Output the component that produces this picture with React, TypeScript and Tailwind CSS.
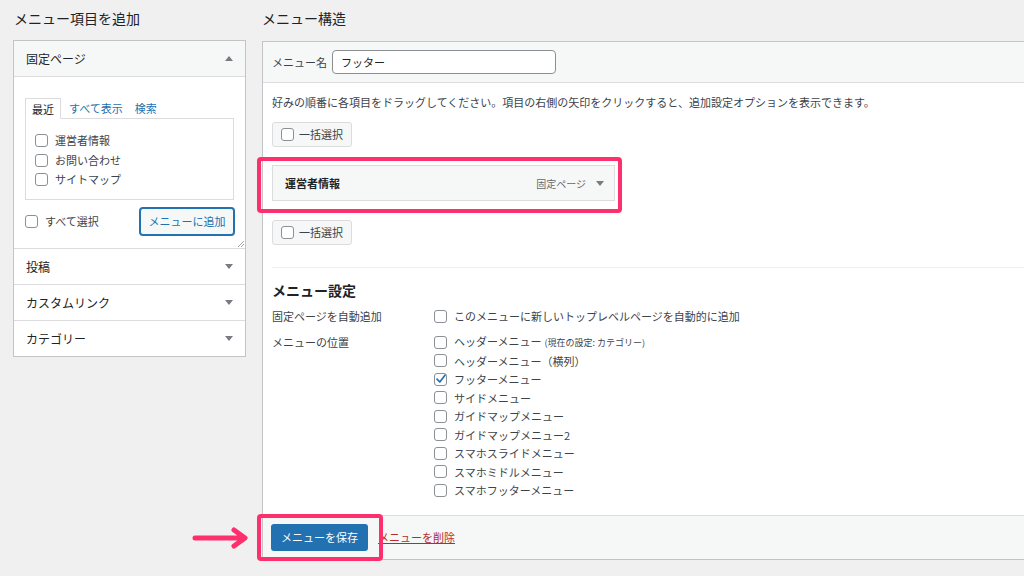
import React from 'react';

const FONT = { fontFamily: '"Noto Sans CJK JP", "Noto Sans", sans-serif' };

const Check = ({ checked = false }: { checked?: boolean }) => (
  <span className="relative inline-block w-[13px] h-[13px] shrink-0 border border-[#8c8f94] rounded-[3px] bg-white">
    {checked && (
      <svg className="absolute -left-[1px] -top-[2px]" width="14" height="14" viewBox="0 0 14 14">
        <path d="M3 7.2 L5.8 10 L11 3.2" fill="none" stroke="#2271b1" strokeWidth="1.7" strokeLinecap="round" strokeLinejoin="round" />
      </svg>
    )}
  </span>
);

const Tri = ({ up = false }: { up?: boolean }) => (
  <svg width="8" height="5" viewBox="0 0 8 5" className="shrink-0">
    <path d={up ? 'M0 5 L4 0 L8 5 Z' : 'M0 0 L8 0 L4 5 Z'} fill="#787c82" />
  </svg>
);

const BulkSelect = () => (
  <div className="inline-flex items-center gap-[5px] h-[25px] w-[80px] pl-[8px] border border-[#dcdcde] rounded-[3px] bg-[#f6f7f7] text-[11px] text-[#3c434a]">
    <Check />
    <span>一括選択</span>
  </div>
);

const locations = [
  'ヘッダーメニュー',
  'ヘッダーメニュー（横列）',
  'フッターメニュー',
  'サイドメニュー',
  'ガイドマップメニュー',
  'ガイドマップメニュー2',
  'スマホスライドメニュー',
  'スマホミドルメニュー',
  'スマホフッターメニュー',
];

export default function App() {
  return (
    <div className="relative w-[1024px] h-[576px] overflow-hidden bg-[#f0f0f1] text-[#3c434a]" style={FONT}>
      <div className="flex pl-[13px] pt-[8px] gap-[16px]">
        {/* left column */}
        <div className="w-[233px] shrink-0">
          <h2 className="pl-[1px] text-[14px] leading-[20px] text-[#1d2327]">メニュー項目を追加</h2>
          <div className="mt-[12px] border border-[#c3c4c7] bg-white">
            <div className="flex items-center justify-between h-[36px] pl-[12px] pr-[12px] bg-[#f6f7f7] border-b border-[#dcdcde] text-[12px] text-[#1d2327]">
              <span>固定ページ</span>
              <Tri up />
            </div>
            <div className="relative px-[11px] pt-[21px] pb-[13px]">
              <div className="flex items-end text-[11px] leading-[16px]">
                <span className="relative z-10 -mb-px px-[6px] pt-[2px] pb-[1px] border border-[#dcdcde] border-b-white bg-white text-[#1d2327]">最近</span>
                <span className="ml-[8px] pb-[2px] text-[#2271b1]">すべて表示</span>
                <span className="ml-[12px] pb-[2px] text-[#2271b1]">検索</span>
              </div>
              <div className="h-[82px] border border-[#dcdcde] pt-[15px] pl-[9px] flex flex-col gap-[6.5px] text-[11px] leading-[13px]">
                {['運営者情報', 'お問い合わせ', 'サイトマップ'].map((t) => (
                  <div key={t} className="flex items-center gap-[7px]">
                    <Check />
                    <span>{t}</span>
                  </div>
                ))}
              </div>
              <div className="mt-[8px] flex items-center justify-between">
                <div className="flex items-center gap-[7px] text-[11px]">
                  <Check />
                  <span>すべて選択</span>
                </div>
                <div className="h-[27px] w-[94px] flex items-center justify-center border border-[#2271b1] rounded-[3px] bg-[#f6f7f7] text-[11px] text-[#2271b1] shadow-[0_0_0_1px_#2271b1]">
                  メニューに追加
                </div>
              </div>
              <svg className="absolute right-[1px] bottom-[1px]" width="7" height="7" viewBox="0 0 7 7">
                <path d="M1 7 L7 1 M4 7 L7 4" stroke="#8c8f94" strokeWidth="0.8" />
              </svg>
            </div>
            {['投稿', 'カスタムリンク', 'カテゴリー'].map((t) => (
              <div key={t} className="flex items-center justify-between h-[36px] pl-[12px] pr-[12px] border-t border-[#dcdcde] text-[12px] text-[#1d2327]">
                <span>{t}</span>
                <Tri />
              </div>
            ))}
          </div>
        </div>

        {/* right column */}
        <div className="flex-1 min-w-0">
          <h2 className="text-[14px] leading-[20px] text-[#1d2327]">メニュー構造</h2>
          <div className="mt-[13px] border border-r-0 border-[#c3c4c7] bg-white">
            <div className="flex items-center h-[41px] pl-[9px] bg-[#f6f7f7] border-b border-[#dcdcde]">
              <span className="text-[11px] mr-[5px]">メニュー名</span>
              <div className="h-[24px] w-[224px] flex items-center pl-[8px] border border-[#8c8f94] rounded-[4px] bg-white text-[11px] text-[#1d2327]">
                フッター
              </div>
            </div>

            <div className="pl-[9px] pt-[11px] pb-[15px]">
              <p className="text-[11px] leading-[16px]">
                好みの順番に各項目をドラッグしてください。項目の右側の矢印をクリックすると、追加設定オプションを表示できます。
              </p>
              <div className="mt-[12px]">
                <BulkSelect />
              </div>

              <div className="relative mt-[18px] w-[343px]">
                <div className="flex items-center h-[36px] pl-[12px] pr-[10px] border border-[#dcdcde] bg-[#f6f7f7]">
                  <span className="text-[11px] font-bold text-[#1d2327]">運営者情報</span>
                  <span className="ml-auto text-[10px] text-[#646970]">固定ページ</span>
                  <span className="ml-[10px]"><Tri /></span>
                </div>
                <div className="absolute -left-[15px] -right-[7px] -top-[8px] -bottom-[12px] border-[4px] border-[#fd2f6c] rounded-[4px]" />
              </div>

              <div className="mt-[19px]">
                <BulkSelect />
              </div>

              <div className="mt-[22px] h-px bg-[#f0f0f1]" />

              <h3 className="mt-[12px] text-[14px] leading-[20px] font-bold text-[#1d2327]">メニュー設定</h3>

              <div className="mt-[7px] flex text-[11px] leading-[18px]">
                <div className="w-[162px] shrink-0">固定ページを自動追加</div>
                <div className="flex items-center gap-[7px]">
                  <Check />
                  <span>このメニューに新しいトップレベルページを自動的に追加</span>
                </div>
              </div>

              <div className="mt-[8px] flex text-[11px] leading-[18.5px]">
                <div className="w-[162px] shrink-0">メニューの位置</div>
                <div className="flex flex-col">
                  {locations.map((t, i) => (
                    <div key={t} className="flex items-center gap-[7px] h-[18.5px]">
                      <Check checked={i === 2} />
                      <span>
                        {t}
                        {i === 0 && <span className="ml-[3px] text-[9px]">(現在の設定: カテゴリー)</span>}
                      </span>
                    </div>
                  ))}
                </div>
              </div>
            </div>

            <div className="relative flex items-center h-[44px] pl-[8px] border-t border-[#dcdcde] bg-[#f6f7f7]">
              <div className="relative">
                <div className="h-[27px] w-[97px] flex items-center justify-center rounded-[3px] bg-[#2271b1] text-[11px] text-white">
                  メニューを保存
                </div>
                <div className="absolute -left-[14px] -right-[15px] -top-[10px] -bottom-[10px] border-[4px] border-[#fd2f6c] rounded-[4px]" />
              </div>
              <span className="ml-[10px] text-[11px] text-[#b32d2e] underline">メニューを削除</span>
            </div>
          </div>
        </div>
      </div>

      {/* annotation arrow */}
      <svg className="absolute left-[191px] top-[526px]" width="60" height="24" viewBox="0 0 60 24">
        <path d="M4 12 L53 12 M43 4 L54 12 L43 20" fill="none" stroke="#fd2f6c" strokeWidth="5" strokeLinecap="round" strokeLinejoin="round" />
      </svg>
    </div>
  );
}
